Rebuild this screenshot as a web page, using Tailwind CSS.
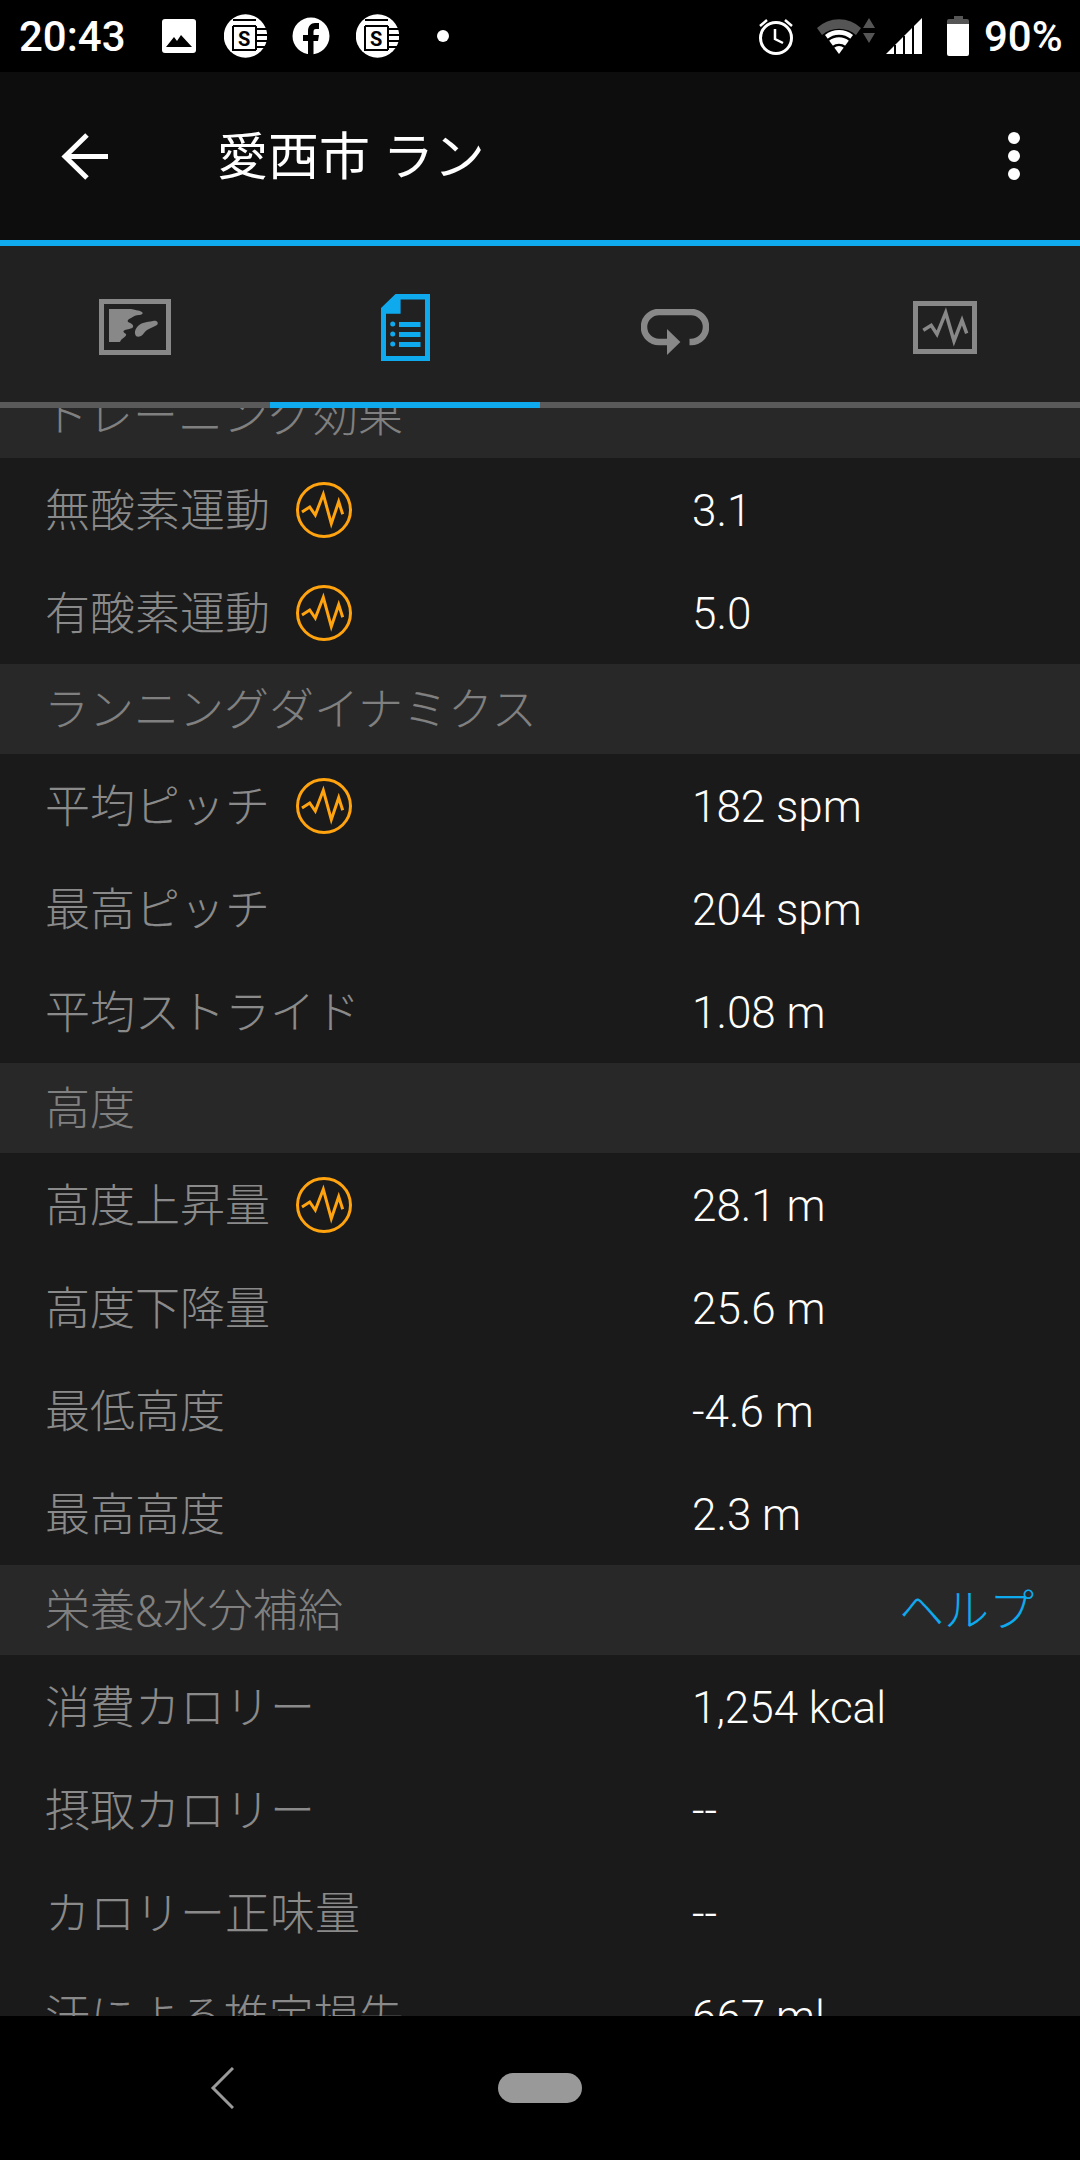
<!DOCTYPE html>
<html lang="ja">
<head>
    <meta charset="UTF-8">
    <title>愛西市 ラン</title>
    <script src="https://cdn.jsdelivr.net/npm/@tailwindcss/browser@4"></script>
</head>
<body class="bg-black">
<div class="w-[1080px] h-[2160px] flex flex-col overflow-hidden bg-[#1a1a1a] font-['Roboto','Noto_Sans_CJK_JP',sans-serif]">

    <!-- Status bar -->
    <div class="h-[72px] shrink-0 bg-black flex items-center pl-[19px] pr-[20px] text-white">
        <span class="text-[42px] font-medium w-[104px] leading-none pt-[2px]">20:43</span>
        <svg class="ml-[39px]" width="34" height="34" viewBox="0 0 34 34"><path fill="#fff" d="M3 0h28a3 3 0 0 1 3 3v28a3 3 0 0 1-3 3H3a3 3 0 0 1-3-3V3a3 3 0 0 1 3-3z"/><path fill="#000" d="M4 28l8-10 3 4 4-6 11 12z"/></svg>
        <svg class="ml-[28px]" width="43" height="44" viewBox="0 0 43 44"><circle cx="21.500" cy="22" r="21.700" fill="#fff"/><path fill="none" stroke="#000" stroke-width="2" d="M9 6h23M9 12h23M9 12v24h23M32 12v24M32 15h12M32 21h12M32 27h12M32 33h12"/><text x="14" y="32" font-size="20" font-weight="700" fill="#000" font-family="Roboto">S</text></svg>
        <svg class="ml-[25px]" width="38" height="38" viewBox="0 0 38 38"><circle cx="19" cy="19" r="18.500" fill="#fff"/><path fill="#000" d="M16 38V24h-5v-6h5v-4c0-5 3-8 7-8h4v6h-3c-2 0-2.500 1-2.500 3v3h5.500l-1 6h-4.500v14z"/></svg>
        <svg class="ml-[26px]" width="43" height="44" viewBox="0 0 43 44"><circle cx="21.500" cy="22" r="21.700" fill="#fff"/><path fill="none" stroke="#000" stroke-width="2" d="M9 6h23M9 12h23M9 12v24h23M32 12v24M32 15h12M32 21h12M32 27h12M32 33h12"/><text x="14" y="32" font-size="20" font-weight="700" fill="#000" font-family="Roboto">S</text></svg>
        <span class="ml-[38px] w-[12px] h-[12px] rounded-full bg-white"></span>
        <div class="flex-1"></div>
        <svg width="36" height="38" viewBox="0 0 36 38"><circle cx="18" cy="21" r="15.500" fill="none" stroke="#fff" stroke-width="3"/><path fill="none" stroke="#fff" stroke-width="2.500" d="M17 12v10l8 4M2 9l7-6M34 9l-7-6"/></svg>
        <svg class="ml-[23px]" width="58" height="38" viewBox="0 0 58 38"><path fill="#555" d="M0 11a32 32 0 0 1 44 0l-5 7a26 26 0 0 0-34 0z"/><path fill="#fff" d="M8 18a22 22 0 0 1 28 0L22 37z"/><path fill="none" stroke="#000" stroke-width="2.500" d="M11 23a17 17 0 0 1 22 0M16 30a10 10 0 0 1 12 0"/><path fill="#555" d="M52 1l6 10H46zM46 16h12l-6 10z"/></svg>
        <svg class="ml-[11px]" width="36" height="36" viewBox="0 0 36 36"><path fill="#fff" d="M36 0v36H0z"/><path fill="none" stroke="#000" stroke-width="2" d="M9 36V27M18 36V18M27 36V8"/></svg>
        <svg class="ml-[25px]" width="22" height="40" viewBox="0 0 22 40"><path fill="#fff" d="M2 5h18a2 2 0 0 1 2 2v31a2 2 0 0 1-2 2H2a2 2 0 0 1-2-2V7a2 2 0 0 1 2-2z"/><path fill="#555" d="M7 0h9v3h4a2 2 0 0 1 2 2v3H0V5a2 2 0 0 1 2-2h5z"/></svg>
        <span class="ml-[15px] w-[76px] text-[42px] font-medium leading-none pt-[2px]">90%</span>
    </div>

    <!-- App bar -->
    <div class="h-[168px] shrink-0 bg-[#0d0d0d] flex items-center text-white">
        <svg class="ml-[60px]" width="48" height="47" viewBox="0 0 48 47"><path fill="none" stroke="#fff" stroke-width="5" d="M48 23.500H4M27 2L5 23.500 27 45"/></svg>
        <span class="ml-[109px] text-[51px] leading-none pt-[2px]">愛西市 ラン</span>
        <div class="ml-auto mr-[60px] flex flex-col gap-[6px]">
            <span class="w-[12px] h-[12px] rounded-full bg-white"></span>
            <span class="w-[12px] h-[12px] rounded-full bg-white"></span>
            <span class="w-[12px] h-[12px] rounded-full bg-white"></span>
        </div>
    </div>

    <!-- Tabs -->
    <div class="h-[168px] shrink-0 bg-[#212121] border-t-[6px] border-[#0fa9ee] flex relative">
        <div class="flex-1 flex items-center justify-center">
            <svg width="72" height="56" viewBox="0 0 72 56"><rect x="2.500" y="2.500" width="67" height="51" fill="none" stroke="#888" stroke-width="5"/><path fill="#888" d="M10 10h22c3 1 8 1 11 3 2 2-1 3-3 3-3 0-5 1-8 3-3 1-4 3-3 4 3 1 6 3 5 5-1 2-6 2-8 3-3 1-1 3 1 4 1 2-3 4-5 6-1 2-1 2-2 2H10z"/><path fill="#888" d="M37 37c-2-3-1-7 2-10 3-3 8-4 15-5 4-1 6 2 4 4-3 2-7 3-10 5-3 2-4 5-6 6-2 1-4 1-5 0z"/></svg>
        </div>
        <div class="flex-1 flex items-center justify-center">
            <svg width="49" height="67" viewBox="0 0 49 67"><path fill="#0fa9ee" fill-rule="evenodd" d="M14.500 0H49V67H0V14zM19.600 5.500V19.700H5V62H44V5.500z"/><circle cx="11.700" cy="30" r="2.500" fill="#0fa9ee"/><circle cx="11.700" cy="40" r="2.500" fill="#0fa9ee"/><circle cx="11.700" cy="50" r="2.500" fill="#0fa9ee"/><path fill="#0fa9ee" d="M18 28h21.500v5H18zM18 38h21.500v5H18zM18 48h21.500v5H18z"/></svg>
        </div>
        <div class="flex-1 flex items-center justify-center">
            <svg class="mt-[10px]" width="68" height="46" viewBox="0 0 68 46"><path fill="none" stroke="#888" stroke-width="6.500" d="M28 33H18a15 15 0 0 1 0-30H50a15 15 0 0 1 0 30h-1.500"/><path fill="#888" d="M26 20L39.400 33 26 46z"/></svg>
        </div>
        <div class="flex-1 flex items-center justify-center">
            <svg width="64" height="53" viewBox="0 0 64 53"><rect x="2.500" y="2.500" width="59" height="48" fill="none" stroke="#888" stroke-width="5"/><path fill="none" stroke="#888" stroke-width="3.500" d="M10.300 29.300L18.200 24.300 24 33.300 32.700 11.700 41 40 49 19.300 53.700 32.300"/></svg>
        </div>
        <div class="absolute left-0 right-0 bottom-0 h-[6px] bg-[#5a5a5a]"></div>
        <div class="absolute left-[270px] w-[270px] bottom-0 h-[6px] bg-[#0fa9ee]"></div>
    </div>

    <!-- Stats list -->
    <div class="flex-1 min-h-0 overflow-hidden text-[#8a8a8a] text-[45px] font-light">
        <div class="h-[50px] bg-[#282828] overflow-hidden relative">
            <span class="absolute left-[43px] -top-[36px] h-[90px] flex items-center text-[#808080]">トレーニング効果</span>
        </div>

        <div class="h-[103px] flex items-center pl-[45px]">
            <span class="flex items-center gap-[25px] w-[647px]"><span class="pt-[4px]">無酸素運動</span>
                <svg width="58" height="58" viewBox="0 0 58 58"><circle cx="29" cy="29" r="26.500" fill="none" stroke="#ffa30f" stroke-width="3"/><path fill="none" stroke="#ffa30f" stroke-width="3" d="M7 31L14.700 26 20.300 34 28.300 13.300 36.300 42.700 43.700 20.700 47.700 33.300"/></svg>
            </span>
            <span class="text-white text-[44px] pt-[3px]">3.1</span>
        </div>
        <div class="h-[103px] flex items-center pl-[45px]">
            <span class="flex items-center gap-[25px] w-[647px]"><span class="pt-[4px]">有酸素運動</span>
                <svg width="58" height="58" viewBox="0 0 58 58"><circle cx="29" cy="29" r="26.500" fill="none" stroke="#ffa30f" stroke-width="3"/><path fill="none" stroke="#ffa30f" stroke-width="3" d="M7 31L14.700 26 20.300 34 28.300 13.300 36.300 42.700 43.700 20.700 47.700 33.300"/></svg>
            </span>
            <span class="text-white text-[44px] pt-[3px]">5.0</span>
        </div>

        <div class="h-[90px] bg-[#282828] flex items-center pl-[44px] pt-[4px] text-[#808080]">ランニングダイナミクス</div>
        <div class="h-[103px] flex items-center pl-[45px]">
            <span class="flex items-center gap-[25px] w-[647px]"><span class="pt-[4px]">平均ピッチ</span>
                <svg width="58" height="58" viewBox="0 0 58 58"><circle cx="29" cy="29" r="26.500" fill="none" stroke="#ffa30f" stroke-width="3"/><path fill="none" stroke="#ffa30f" stroke-width="3" d="M7 31L14.700 26 20.300 34 28.300 13.300 36.300 42.700 43.700 20.700 47.700 33.300"/></svg>
            </span>
            <span class="text-white text-[44px] pt-[3px]">182 spm</span>
        </div>
        <div class="h-[103px] flex items-center pl-[45px] pt-[4px]"><span class="w-[647px]">最高ピッチ</span><span class="text-white text-[44px] pb-[2px]">204 spm</span></div>
        <div class="h-[103px] flex items-center pl-[45px] pt-[4px]"><span class="w-[647px]">平均ストライド</span><span class="text-white text-[44px] pb-[2px]">1.08 m</span></div>

        <div class="h-[90px] bg-[#282828] flex items-center pl-[45px] pt-[4px] text-[#808080]">高度</div>
        <div class="h-[103px] flex items-center pl-[45px]">
            <span class="flex items-center gap-[25px] w-[647px]"><span class="pt-[4px]">高度上昇量</span>
                <svg width="58" height="58" viewBox="0 0 58 58"><circle cx="29" cy="29" r="26.500" fill="none" stroke="#ffa30f" stroke-width="3"/><path fill="none" stroke="#ffa30f" stroke-width="3" d="M7 31L14.700 26 20.300 34 28.300 13.300 36.300 42.700 43.700 20.700 47.700 33.300"/></svg>
            </span>
            <span class="text-white text-[44px] pt-[3px]">28.1 m</span>
        </div>
        <div class="h-[103px] flex items-center pl-[45px] pt-[4px]"><span class="w-[647px]">高度下降量</span><span class="text-white text-[44px] pb-[2px]">25.6 m</span></div>
        <div class="h-[103px] flex items-center pl-[45px] pt-[4px]"><span class="w-[647px]">最低高度</span><span class="text-white text-[44px] pb-[2px]">-4.6 m</span></div>
        <div class="h-[103px] flex items-center pl-[45px] pt-[4px]"><span class="w-[647px]">最高高度</span><span class="text-white text-[44px] pb-[2px]">2.3 m</span></div>

        <div class="h-[90px] bg-[#282828] flex items-center justify-between pl-[45px] pr-[46px] pt-[4px] text-[#808080]">
            <span>栄養&amp;水分補給</span>
            <span class="text-[#0fa9ee]">ヘルプ</span>
        </div>
        <div class="h-[103px] flex items-center pl-[45px] pt-[4px]"><span class="w-[647px]">消費カロリー</span><span class="text-white text-[44px] pb-[2px]">1,254 kcal</span></div>
        <div class="h-[103px] flex items-center pl-[45px] pt-[4px]"><span class="w-[647px]">摂取カロリー</span><span class="text-white text-[44px] pb-[2px]">--</span></div>
        <div class="h-[103px] flex items-center pl-[45px] pt-[4px]"><span class="w-[647px]">カロリー正味量</span><span class="text-white text-[44px] pb-[2px]">--</span></div>
        <div class="h-[103px] flex items-center pl-[45px] pt-[4px]"><span class="w-[647px]">汗による推定損失</span><span class="text-white text-[44px] pb-[2px]">667 ml</span></div>
    </div>

    <!-- Nav bar -->
    <div class="h-[144px] shrink-0 bg-black relative flex items-center justify-center">
        <svg class="absolute left-[210px] top-[51px]" width="24" height="42" viewBox="0 0 24 42"><path fill="none" stroke="#9a9a9a" stroke-width="3" d="M23 1L3 21l20 20"/></svg>
        <div class="w-[84px] h-[30px] rounded-[15px] bg-[#999]"></div>
    </div>
</div>
</body>
</html>
